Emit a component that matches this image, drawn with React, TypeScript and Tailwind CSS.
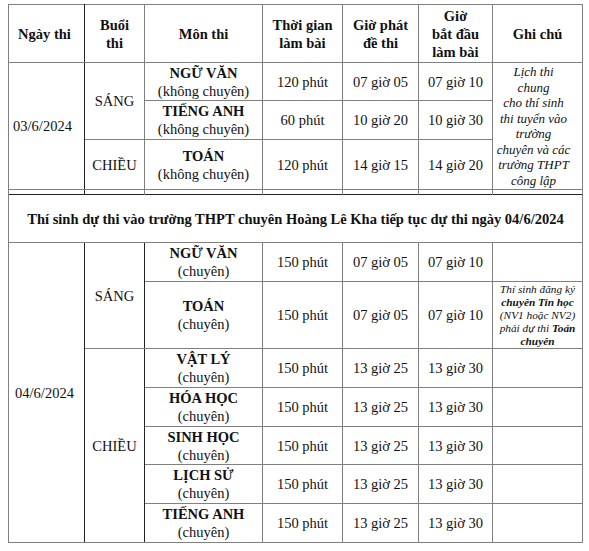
const td = 'border border-[#808080] text-center align-middle p-0';
const dark = 'border-r-[#222]';

type Row = { name: string; note: string; time: string; start: string; begin: string };

const afternoon: Row[] = [
  { name: 'VẬT LÝ', note: '(chuyên)', time: '150 phút', start: '13 giờ 25', begin: '13 giờ 30' },
  { name: 'HÓA HỌC', note: '(chuyên)', time: '150 phút', start: '13 giờ 25', begin: '13 giờ 30' },
  { name: 'SINH HỌC', note: '(chuyên)', time: '150 phút', start: '13 giờ 25', begin: '13 giờ 30' },
  { name: 'LỊCH SỬ', note: '(chuyên)', time: '150 phút', start: '13 giờ 25', begin: '13 giờ 30' },
  { name: 'TIẾNG ANH', note: '(chuyên)', time: '150 phút', start: '13 giờ 25', begin: '13 giờ 30' },
];

function Subject({ name, note }: { name: string; note: string }) {
  return (
    <>
      <div className="font-bold">{name}</div>
      <div>{note}</div>
    </>
  );
}

export default function App() {
  return (
    <div className="min-h-screen bg-white pl-2 pt-1 font-['Liberation_Serif','Times_New_Roman',serif] text-[14.5px] leading-[18px] text-[#111]">
      <table className="table-fixed border-collapse w-[574px]">
        <colgroup>
          <col className="w-[76px]" />
          <col className="w-[60px]" />
          <col className="w-[118px]" />
          <col className="w-[80px]" />
          <col className="w-[76px]" />
          <col className="w-[74px]" />
          <col className="w-[90px]" />
        </colgroup>
        <tbody>
          {/* header */}
          <tr className="h-[58px] font-bold">
            <td className={`${td} ${dark} pr-1`}>Ngày thi</td>
            <td className={td}>Buổi<br />thi</td>
            <td className={td}>Môn thi</td>
            <td className={td}>Thời gian<br />làm bài</td>
            <td className={td}>Giờ phát<br />đề thi</td>
            <td className={td}>Giờ<br />bắt đầu<br />làm bài</td>
            <td className={td}>Ghi chú</td>
          </tr>

          {/* 03/6 */}
          <tr className="h-[38px]">
            <td rowSpan={3} className={`${td} ${dark} pr-2`}>03/6/2024</td>
            <td rowSpan={2} className={td}>SÁNG</td>
            <td className={td}><Subject name="NGỮ VĂN" note="(không chuyên)" /></td>
            <td className={td}>120 phút</td>
            <td className={td}>07 giờ 05</td>
            <td className={td}>07 giờ 10</td>
            <td rowSpan={3} className={`${td} pr-2 italic text-[13px] leading-[15.5px]`}>
              Lịch thi<br />chung<br />cho thí sinh<br />thi tuyển vào<br />trường<br />chuyên và các<br />trường THPT<br />công lập
            </td>
          </tr>
          <tr className="h-[39px]">
            <td className={td}><Subject name="TIẾNG ANH" note="(không chuyên)" /></td>
            <td className={td}>60 phút</td>
            <td className={td}>10 giờ 20</td>
            <td className={td}>10 giờ 30</td>
          </tr>
          <tr className="h-[50px]">
            <td className={td}>CHIỀU</td>
            <td className={td}><Subject name="TOÁN" note="(không chuyên)" /></td>
            <td className={td}>120 phút</td>
            <td className={td}>14 giờ 15</td>
            <td className={td}>14 giờ 20</td>
          </tr>

          {/* gap between the two blocks */}
          <tr className="h-[5px]">
            <td className="border-x border-y-0 border-[#808080] border-r-[#222] p-0" />
            <td className="border-x border-y-0 border-[#808080] p-0" />
            <td className="border-x border-y-0 border-[#808080] p-0" />
            <td className="border-x border-y-0 border-[#808080] p-0" />
            <td className="border-x border-y-0 border-[#808080] p-0" />
            <td className="border-x border-y-0 border-[#808080] p-0" />
            <td className="border-x border-y-0 border-[#808080] p-0" />
          </tr>

          {/* banner */}
          <tr className="h-[48px]">
            <td colSpan={7} className={`${td} border-t-[#222] font-bold`}>
              Thí sinh dự thi vào trường THPT chuyên Hoàng Lê Kha tiếp tục dự thi ngày 04/6/2024
            </td>
          </tr>

          {/* 04/6 */}
          <tr className="h-[39px]">
            <td rowSpan={7} className={`${td} ${dark} pr-1`}>04/6/2024</td>
            <td rowSpan={2} className={`${td} ${dark}`}>SÁNG</td>
            <td className={td}><Subject name="NGỮ VĂN" note="(chuyên)" /></td>
            <td className={td}>150 phút</td>
            <td className={td}>07 giờ 05</td>
            <td className={td}>07 giờ 10</td>
            <td className={td} />
          </tr>
          <tr className="h-[67px]">
            <td className={td}><Subject name="TOÁN" note="(chuyên)" /></td>
            <td className={td}>150 phút</td>
            <td className={td}>07 giờ 05</td>
            <td className={td}>07 giờ 10</td>
            <td className={`${td} italic text-[11.3px] leading-[13px]`}>
              Thí sinh đăng ký<br />
              <b>chuyên Tin học</b><br />
              (NV1 hoặc NV2)<br />
              phải dự thi <b>Toán</b><br />
              <b>chuyên</b>
            </td>
          </tr>
          {afternoon.map((r, i) => (
            <tr key={r.name} className={i === 2 ? 'h-[38px]' : 'h-[39px]'}>
              {i === 0 && (
                <td rowSpan={5} className={`${td} ${dark}`}>CHIỀU</td>
              )}
              <td className={td}><Subject name={r.name} note={r.note} /></td>
              <td className={td}>{r.time}</td>
              <td className={td}>{r.start}</td>
              <td className={td}>{r.begin}</td>
              <td className={td} />
            </tr>
          ))}
        </tbody>
      </table>
    </div>
  );
}
